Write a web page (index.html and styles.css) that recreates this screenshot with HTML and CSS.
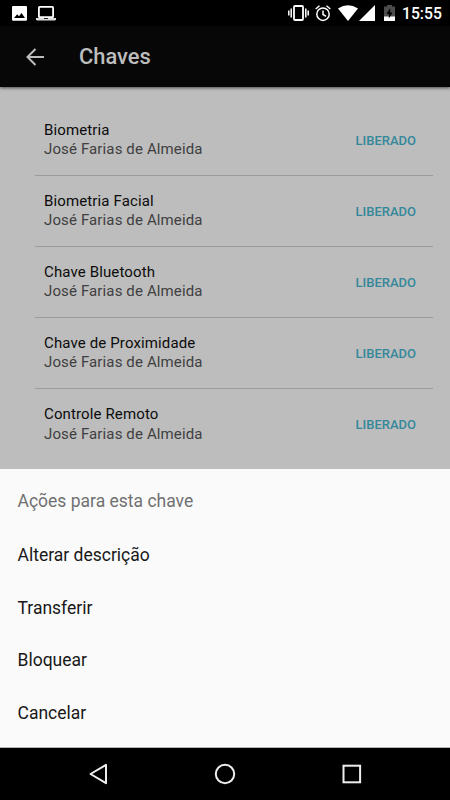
FILE: index.html
```html
<!DOCTYPE html>
<html lang="pt-BR">
<head>
<meta charset="utf-8">
<title>Chaves</title>
<link rel="stylesheet" href="styles.css">
</head>
<body>
<div class="screen">
  <div class="status">
    <div class="status-left">
      <svg width="15" height="15" viewBox="0 0 15 15"><path fill="#fff" fill-rule="evenodd" d="M1 0h13q1 0 1 1v12.700q0 1-1 1H1q-1 0-1-1V1q0-1 1-1zM2 12h11L9.500 7 7 10.300 5.200 8.300z"/></svg>
      <svg width="20" height="15" viewBox="0 0 20 15"><rect x="2.900" y=".9" width="14.200" height="10.300" rx=".8" fill="none" stroke="#fff" stroke-width="1.800"/><path fill="#ddd" d="M0 12h20v1.500l-1 1H1l-1-1z"/><path stroke="#222" d="M8 12.500h4"/></svg>
    </div>
    <div class="status-right">
      <svg width="22" height="16" viewBox="0 0 22 16"><rect x="6" y="1" width="9" height="14" rx="1" fill="none" stroke="#fff" stroke-width="1.800"/><path stroke="#fff" stroke-width="1.500" d="M.8 5.500v5M3.200 3.500v9M17.800 3.500v9M20.200 5.500v5"/></svg>
      <svg class="alarm" width="16" height="17" viewBox="0 0 16 17"><g fill="none" stroke="#fff" stroke-width="1.500"><circle cx="8" cy="9.200" r="6.200"/><path d="M.7 4 4.500.8M15.300 4 11.500.8M8 5.500v4l3 1.800"/></g></svg>
      <svg class="wifi" width="20" height="16" viewBox="0 0 20 16"><path fill="#fff" d="M0 3.500Q10-3 20 3.500L10 16z"/></svg>
      <svg class="signal" width="16" height="16" viewBox="0 0 16 16"><path fill="#fff" d="M16 0v16H0z"/></svg>
      <svg class="battery" width="11" height="16" viewBox="0 0 11 16"><path fill="#4d4d4d" d="M3 0h5v1.500h3V16H0V1.500h3z"/><path fill="#fff" d="M0 11.500h11V16H0z"/><path fill="#000" d="M6.200 3 2.500 9h2.300v4.500L8.500 7.500H6.200z"/></svg>
      <span class="clock">15:55</span>
    </div>
  </div>
  <header class="appbar">
    <svg width="18" height="18" viewBox="0 0 18 18"><path fill="none" stroke="#bdbdbd" stroke-width="2" d="M18 9H1.500M9.500 1 1.500 9l8 8"/></svg>
    <h1>Chaves</h1>
  </header>
  <main class="keys">
    <div class="key"><div><p class="name">Biometria</p><p class="owner">José Farias de Almeida</p></div><span class="state">LIBERADO</span></div>
    <div class="key"><div><p class="name">Biometria Facial</p><p class="owner">José Farias de Almeida</p></div><span class="state">LIBERADO</span></div>
    <div class="key"><div><p class="name">Chave Bluetooth</p><p class="owner">José Farias de Almeida</p></div><span class="state">LIBERADO</span></div>
    <div class="key"><div><p class="name">Chave de Proximidade</p><p class="owner">José Farias de Almeida</p></div><span class="state">LIBERADO</span></div>
    <div class="key"><div><p class="name">Controle Remoto</p><p class="owner">José Farias de Almeida</p></div><span class="state">LIBERADO</span></div>
  </main>
  <section class="sheet">
    <h2>Ações para esta chave</h2>
    <ul>
      <li>Alterar descrição</li>
      <li>Transferir</li>
      <li>Bloquear</li>
      <li>Cancelar</li>
    </ul>
  </section>
  <nav class="navbar">
    <svg width="20" height="22" viewBox="0 0 20 22"><path fill="none" stroke="#eee" stroke-width="2" stroke-linejoin="round" d="M18 1.800v18.400L2.500 11z"/></svg>
    <svg width="22" height="22" viewBox="0 0 22 22"><circle cx="11" cy="11" r="9.200" fill="none" stroke="#eee" stroke-width="2"/></svg>
    <svg width="20" height="20" viewBox="0 0 20 20"><rect x="1.500" y="1.700" width="16.600" height="16.600" fill="none" stroke="#eee" stroke-width="2"/></svg>
  </nav>
</div>
</body>
</html>
```
FILE: styles.css
```css
* { box-sizing: border-box; }
body, h1, h2, p, ul { margin: 0; padding: 0; }
body { font-family: Roboto, "Liberation Sans", sans-serif; background: #000; }
svg { display: block; flex: none; }
.screen { width: 450px; height: 800px; display: flex; flex-direction: column; overflow: hidden; background: #bdbdbd; }
.status { height: 26px; flex: none; display: flex; justify-content: space-between; background: #000; padding: 0 8px 0 12px; }
.status-left { display: flex; gap: 9px; padding-top: 6px; }
.status-right { display: flex; padding-top: 5px; }
.alarm { margin-left: 5px; }
.wifi { margin-left: 7px; }
.signal { margin-left: 1px; }
.battery { margin-left: 9px; }
.clock { margin-left: 7px; width: 40px; color: #fff; font-size: 15.700px; font-weight: 500; line-height: 18px; white-space: nowrap; }
.appbar { height: 61px; flex: none; display: flex; align-items: center; padding-left: 26px; background: #070707; box-shadow: 0 1px 3px rgba(0,0,0,.6); }
.appbar h1 { margin-left: 35px; padding-top: 1px; font-size: 21.900px; line-height: 26px; font-weight: 500; color: #bdbdbd; }
.keys { height: 382px; flex: none; padding: 18px 17px 0 35px; }
.key { height: 71.100px; display: flex; justify-content: space-between; align-items: flex-start; padding: 14.600px 17px 0 9px; border-bottom: 1px solid #9b9b9b; }
.key:last-child { border-bottom: 0; }
.name, .owner { font-size: 15px; line-height: 20px; letter-spacing: .13px; color: #0c0c0c; }
.owner { margin-top: -.4px; color: #404040; }
.state { margin-top: 12px; font-size: 13px; line-height: 18px; font-weight: 500; color: #35889b; }
.sheet { height: 279px; flex: none; padding: 5px 18px 0 17.500px; background: #fafafa; border-bottom: 1px solid #b5b5b5; font-size: 17.500px; font-weight: 400; }
.sheet h2 { font-size: inherit; font-weight: inherit; line-height: 54px; color: #707070; }
.sheet ul { list-style: none; }
.sheet li { height: 52.600px; line-height: 54px; color: #181818; }
.navbar { height: 52px; flex: none; display: flex; align-items: center; justify-content: center; gap: 106px; background: #000; }
```
